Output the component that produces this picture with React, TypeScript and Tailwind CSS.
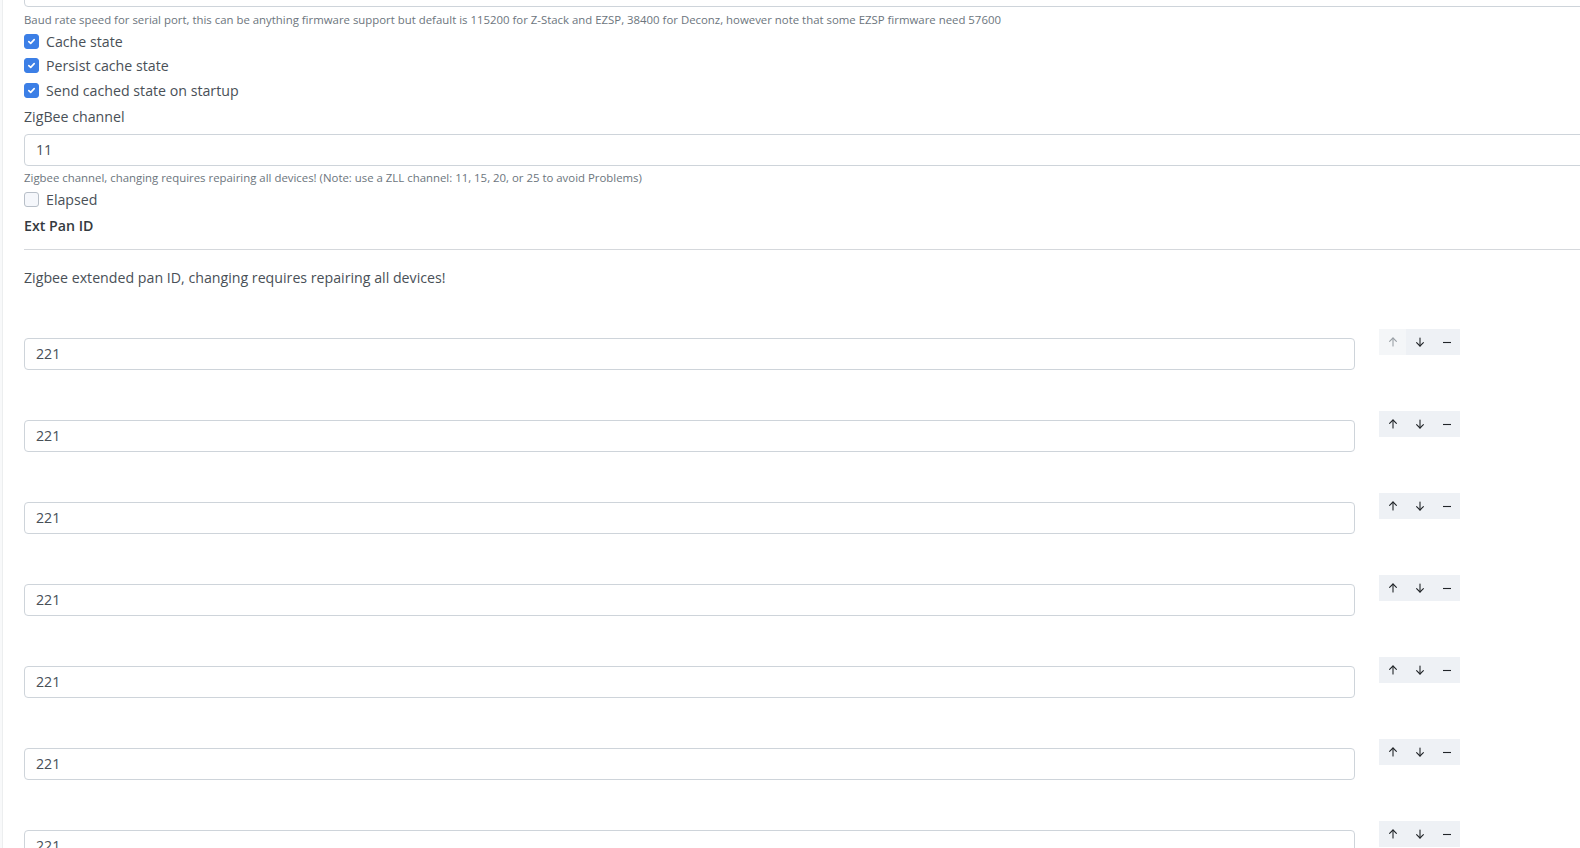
import type { ReactNode } from 'react';

const FONT = 'font-["Open_Sans","Noto_Sans",sans-serif]';

// small check mark for the checked boxes
const CheckBox = ({ checked }: { checked: boolean }) => (
  <span
    className={`inline-flex shrink-0 items-center justify-center w-[15px] h-[15px] rounded-[3px] border ${
      checked ? 'bg-[#3c7fe6] border-[#3c7fe6]' : 'bg-[#f5f7fb] border-[#b8bfc8]'
    }`}
  >
    {checked && (
      <svg width="9" height="9" viewBox="0 0 9 9" fill="none">
        <path d="M1.8 4.6 L3.7 6.4 L7.2 2.6" stroke="white" strokeWidth="1.6" strokeLinecap="round" strokeLinejoin="round" />
      </svg>
    )}
  </span>
);

const CheckRow = ({ label, checked }: { label: string; checked: boolean }) => (
  <div className="flex items-center h-[24.5px]">
    <CheckBox checked={checked} />
    <span className="ml-[7px] text-[14.2px] text-[#495057]">{label}</span>
  </div>
);

const Arrow = ({ dir, muted }: { dir: 'up' | 'down'; muted?: boolean }) => (
  <svg
    width="10"
    height="10"
    viewBox="0 0 10 10"
    fill="none"
    stroke={muted ? '#9aa0a6' : '#212529'}
    strokeWidth="1.1"
    strokeLinecap="round"
    strokeLinejoin="round"
    className={dir === 'down' ? 'rotate-180' : ''}
  >
    <path d="M5 1 V9" />
    <path d="M1.6 4.4 L5 1 L8.4 4.4" />
  </svg>
);

const Minus = () => (
  <svg width="10" height="10" viewBox="0 0 10 10" fill="none" stroke="#212529" strokeWidth="1.1">
    <path d="M1 5.5 H9" />
  </svg>
);

const Btn = ({ children, light }: { children: ReactNode; light?: boolean }) => (
  <button
    className={`flex items-center justify-center w-[27px] h-[26px] ${
      light ? 'bg-[#f4f6f8]' : 'bg-[#eef1f5]'
    }`}
  >
    {children}
  </button>
);

const PanRow = ({ value, first }: { value: string; first?: boolean }) => (
  <div className="flex items-start h-[82px]">
    <div className="mt-[9px] w-[1331px] h-[32px] flex items-center px-[11px] border border-[#ced4da] rounded-[4px] text-[14.2px] text-[#495057]">
      {value}
    </div>
    <div className="ml-[24px] flex">
      <Btn light={first}>
        <Arrow dir="up" muted={first} />
      </Btn>
      <Btn>
        <Arrow dir="down" />
      </Btn>
      <Btn>
        <Minus />
      </Btn>
    </div>
  </div>
);

export default function App() {
  const rows = ['221', '221', '221', '221', '221', '221', '221'];

  return (
    <div className={`w-[1580px] h-[848px] overflow-hidden bg-white flex items-start ${FONT}`}>
      <div className="w-[3px] h-full shrink-0 bg-[#f8f9fa] border-r border-[#eceeef]" />
      <div className="pl-[21px] w-[1700px] shrink-0">
        {/* serial baudrate input, scrolled mostly out of view */}
        <div className="-mt-[25px] h-[32px] border border-[#ced4da] rounded-[4px] bg-white" />
        <div className="h-[22px] pt-[4px] flex items-center text-[11.4px] text-[#6c757d] whitespace-nowrap">
          Baud rate speed for serial port, this can be anything firmware support but default is 115200 for Z-Stack and EZSP, 38400 for Deconz, however note that some EZSP firmware need 57600
        </div>

        <CheckRow label="Cache state" checked />
        <CheckRow label="Persist cache state" checked />
        <CheckRow label="Send cached state on startup" checked />

        <div className="h-[27.5px] flex items-center text-[14.2px] text-[#495057]">ZigBee channel</div>
        <div className="mt-[4px] h-[32px] flex items-center px-[11px] border border-[#ced4da] rounded-[4px] text-[14.2px] text-[#495057]">
          11
        </div>
        <div className="h-[24px] flex items-center text-[11.4px] text-[#6c757d] whitespace-nowrap">
          Zigbee channel, changing requires repairing all devices! (Note: use a ZLL channel: 11, 15, 20, or 25 to avoid Problems)
        </div>
        <div className="h-[19px] flex items-center">
          <CheckBox checked={false} />
          <span className="ml-[7px] text-[14.2px] text-[#495057]">Elapsed</span>
        </div>

        {/* Ext Pan ID array */}
        <div className="h-[33px] flex items-center text-[14.2px] font-semibold text-[#343a40]">Ext Pan ID</div>
        <div className="mt-[7px] border-t border-[#d5d8dc]" />
        <div className="h-[79px] pt-[18px] text-[14.2px] leading-[20px] text-[#495057]">
          Zigbee extended pan ID, changing requires repairing all devices!
        </div>

        {rows.map((v, i) => (
          <PanRow key={i} value={v} first={i === 0} />
        ))}
      </div>
    </div>
  );
}
